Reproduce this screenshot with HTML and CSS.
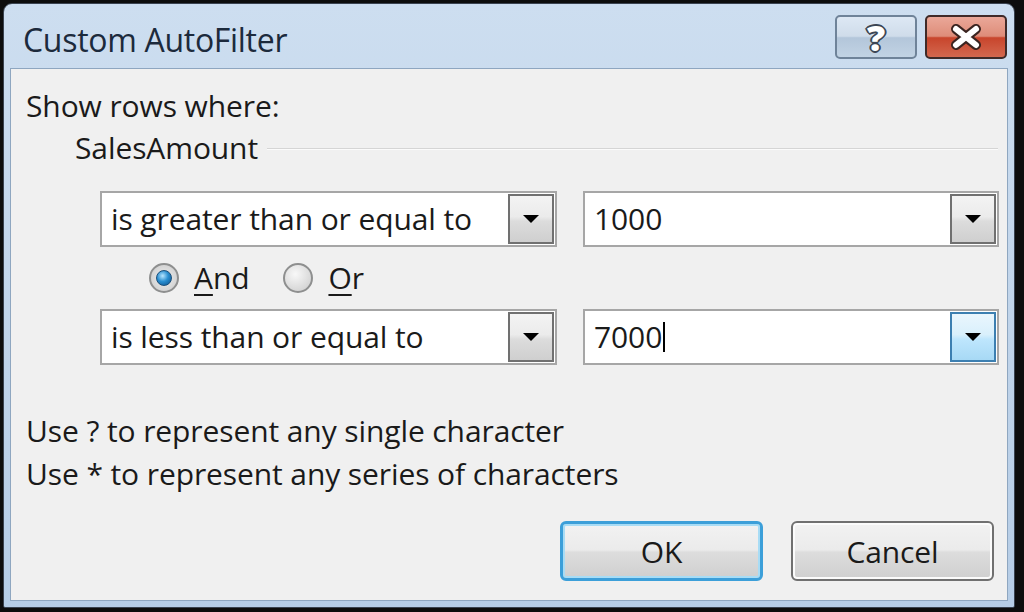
FILE: index.html
```html
<!DOCTYPE html>
<html>
<head>
<meta charset="utf-8">
<link rel="stylesheet" href="styles.css">
</head>
<body>
<div class="window">
  <div class="titlebar">
    <div class="title">Custom AutoFilter</div>
    <div class="caption-buttons">
      <div class="cap-btn help"><span class="help-glyph">?</span></div>
      <div class="cap-btn close">
        <svg width="40" height="26" viewBox="0 0 40 26"><path d="M10 5 L30 21 M30 5 L10 21" class="x-outline"/><path d="M10 5 L30 21 M30 5 L10 21" class="x-fill"/></svg>
      </div>
    </div>
  </div>
  <div class="client">
    <div class="label show">Show rows where:</div>
    <div class="group">
      <span class="group-title">SalesAmount</span>
      <span class="group-line"></span>
    </div>
    <div class="crit-row first">
      <div class="combo">
        <span class="combo-text">is greater than or equal to</span>
        <span class="drop"><span class="arrow"></span></span>
      </div>
      <div class="textbox">
        <span class="tb-text">1000</span>
        <span class="drop small"><span class="arrow"></span></span>
      </div>
    </div>
    <div class="radio-row">
      <label class="radio"><span class="radio-circle checked"><span class="dot"></span></span><span class="radio-label"><u>A</u>nd</span></label>
      <label class="radio"><span class="radio-circle"></span><span class="radio-label"><u>O</u>r</span></label>
    </div>
    <div class="crit-row second">
      <div class="combo">
        <span class="combo-text">is less than or equal to</span>
        <span class="drop"><span class="arrow"></span></span>
      </div>
      <div class="textbox">
        <span class="tb-text">7000<span class="caret"></span></span>
        <span class="drop small hot"><span class="arrow"></span></span>
      </div>
    </div>
    <div class="hint first-hint">Use ? to represent any single character</div>
    <div class="hint">Use * to represent any series of characters</div>
    <div class="buttons">
      <div class="btn default">OK</div>
      <div class="btn">Cancel</div>
    </div>
  </div>
</div>
</body>
</html>
```
FILE: styles.css
```css
html, body {
  margin: 0;
  padding: 0;
  background: #0d0d0d;
  width: 1024px;
  height: 612px;
  overflow: hidden;
}
body {
  font-family: "Open Sans", "Noto Sans", sans-serif;
  color: #1a1a1a;
}
.window {
  margin: 3px 0 0 3px;
  width: 1012px;
  height: 605px;
  box-sizing: border-box;
  border: 1px solid #3a4350;
  border-radius: 9px 9px 2px 2px;
  background: linear-gradient(#cddef0, #bfd3e9 60%, #b6cde6);
  padding: 0 6px 6px 6px;
  display: flex;
  flex-direction: column;
}
.titlebar {
  height: 64px;
  display: flex;
  align-items: flex-start;
  justify-content: space-between;
  flex: none;
}
.title {
  font-size: 32px;
  color: #1c2a3c;
  margin: 16px 0 0 13px;
  line-height: 40px;
  letter-spacing: -0.3px;
}
.caption-buttons {
  display: flex;
  gap: 8px;
  margin-top: 11px;
  margin-right: 1px;
}
.cap-btn {
  width: 82px;
  height: 44px;
  box-sizing: border-box;
  border-radius: 5px;
  display: flex;
  align-items: center;
  justify-content: center;
}
.help {
  border: 2px solid #6f8399;
  background: linear-gradient(#dde8f4 0%, #cfdcea 48%, #b3c6da 52%, #c2d3e4 100%);
}
.close {
  border: 2px solid #3f2a28;
  background: linear-gradient(#eaa899 0%, #de8c79 48%, #c8452c 52%, #d3684f 100%);
}
.help-glyph {
  font-family: "Open Sans", sans-serif;
  font-weight: 800;
  font-size: 36px;
  line-height: 36px;
  color: #ffffff;
  margin-top: 2px;
  text-shadow:
    -2px 0 0 #3c4654, 2px 0 0 #3c4654, 0 -2px 0 #3c4654, 0 2px 0 #3c4654,
    -1px -1px 0 #3c4654, 1px -1px 0 #3c4654, -1px 1px 0 #3c4654, 1px 1px 0 #3c4654;
}
.x-outline {
  stroke: #3a2420;
  stroke-width: 10;
  stroke-linecap: round;
}
.x-fill {
  stroke: #ffffff;
  stroke-width: 6;
  stroke-linecap: round;
}
.client {
  flex: 1;
  background: #f0f0f0;
  border: 1px solid #8ea6c0;
  padding: 0 0 0 15px;
  display: flex;
  flex-direction: column;
}
.label, .group-title, .combo-text, .tb-text, .radio-label, .hint, .btn {
  font-size: 30px;
  letter-spacing: -0.1px;
}
.show {
  margin-top: 17px;
  line-height: 40px;
}
.group {
  display: flex;
  align-items: center;
  margin-left: 49px;
  height: 44px;
}
.group-title {
  line-height: 40px;
}
.group-line {
  flex: 1;
  height: 1px;
  background: #d5d5d5;
  border-bottom: 1px solid #fbfbfb;
  margin: 2px 9px 0 9px;
}
.crit-row {
  display: flex;
  gap: 26px;
  margin-left: 74px;
}
.crit-row.first {
  margin-top: 21px;
}
.combo, .textbox {
  height: 56px;
  box-sizing: border-box;
  background: #ffffff;
  border: 2px solid #a6a6a6;
  display: flex;
  align-items: center;
  justify-content: space-between;
}
.combo {
  width: 457px;
}
.textbox {
  width: 416px;
}
.combo-text, .tb-text {
  padding-left: 9px;
  line-height: 40px;
  display: flex;
  align-items: center;
}
.drop {
  width: 46px;
  align-self: stretch;
  margin: 1px;
  box-sizing: border-box;
  border: 2px solid #707070;
  background: linear-gradient(#f3f3f3 0%, #ebebeb 45%, #dcdcdc 55%, #cfcfcf 100%);
  display: flex;
  align-items: center;
  justify-content: center;
}
.drop.hot {
  border-color: #3c7fb1;
  background: linear-gradient(#eaf6fd 0%, #d9f0fc 45%, #bee6fd 55%, #a7d9f5 100%);
}
.arrow {
  width: 0;
  height: 0;
  border-left: 8px solid transparent;
  border-right: 8px solid transparent;
  border-top: 8px solid #000000;
}
.caret {
  display: inline-block;
  width: 2px;
  height: 30px;
  background: #000;
  margin-left: 1px;
}
.radio-row {
  display: flex;
  align-items: center;
  height: 62px;
  margin-left: 123px;
  gap: 34px;
}
.radio {
  display: flex;
  align-items: center;
  gap: 15px;
}
.radio-circle {
  width: 30px;
  height: 30px;
  box-sizing: border-box;
  border-radius: 50%;
  border: 2px solid #8e8f8f;
  background: radial-gradient(circle at 40% 35%, #f8f8f8, #d8d8d8 70%, #c9c9c9);
  display: flex;
  align-items: center;
  justify-content: center;
}
.radio-circle .dot {
  width: 14px;
  height: 14px;
  border-radius: 50%;
  background: radial-gradient(circle at 40% 35%, #b8e6ff, #2a8fd1 45%, #0b4f8a 100%);
  border: 1px solid #1b4f7a;
}
.radio-circle.checked {
  background: radial-gradient(circle, #f0f0f0, #c8c8c8);
}
.radio-label {
  line-height: 40px;
}
.radio-label u {
  text-decoration-thickness: 2px;
  text-underline-offset: 5px;
}
.hint {
  line-height: 43px;
}
.first-hint {
  margin-top: 44px;
}
.buttons {
  display: flex;
  justify-content: flex-end;
  gap: 28px;
  margin: 26px 13px 0 0;
}
.btn {
  width: 203px;
  height: 60px;
  box-sizing: border-box;
  border: 2px solid #707070;
  border-radius: 6px;
  background: linear-gradient(#f2f2f2 0%, #ebebeb 48%, #dddddd 52%, #cfcfcf 100%);
  display: flex;
  align-items: center;
  justify-content: center;
  box-shadow: inset 0 0 0 2px #fbfbfb;
}
.btn.default {
  border: 3px solid #3c9fd9;
  box-shadow: inset 0 0 0 2px #a8dcf5;
}
```
